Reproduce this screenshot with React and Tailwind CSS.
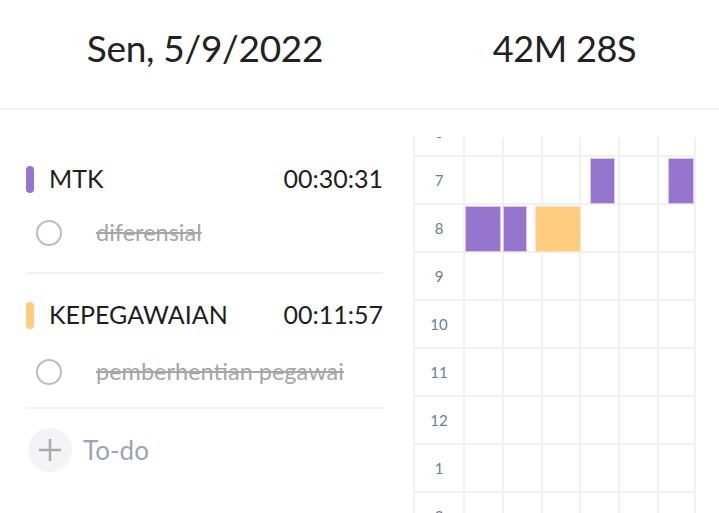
import React from 'react';

const groups = [
  { name: 'MTK', time: '00:30:31', color: 'bg-[#9575cd]', todo: 'diferensial' },
  { name: 'KEPEGAWAIAN', time: '00:11:57', color: 'bg-[#ffcc80]', todo: 'pemberhentian pegawai' },
];

const hours = ['6', '7', '8', '9', '10', '11', '12', '1', '2'];

// blocks per hour row: left offset / width in px from the row's left edge
const blocks = {
  7: [
    { left: 177, width: 25, color: 'bg-[#9575cd] border-[#d6c9ee]' },
    { left: 255, width: 26, color: 'bg-[#9575cd] border-[#d6c9ee]' },
  ],
  8: [
    { left: 52, width: 36, color: 'bg-[#9575cd] border-[#d6c9ee]' },
    { left: 90, width: 24, color: 'bg-[#9575cd] border-[#d6c9ee]' },
    { left: 122, width: 46, color: 'bg-[#ffcc80] border-[#ffe4bd]' },
  ],
};

const Group = ({ group, first }) => (
  <div className={`border-b-2 border-[#f1f1f1] ${first ? 'pt-[22px] pb-[19px]' : 'pt-[21px] pb-[15px]'}`}>
    <div className="flex items-center h-[40px]">
      <span className={`w-[8px] h-[27px] rounded-full ${group.color}`}></span>
      <span className="ml-[15px] text-[25px] text-[#1f1f1f]">{group.name}</span>
      <span className="ml-auto text-[25px] text-[#1f1f1f]">{group.time}</span>
    </div>
    <div className={`flex items-center h-[40px] ${first ? 'mt-[14px]' : 'mt-[17px]'}`}>
      <span className="ml-[10px] w-[26px] h-[26px] rounded-full border-2 border-[#bdbdbd]"></span>
      <span className="ml-[34px] text-[23.5px] text-[#a6a6a6] line-through">{group.todo}</span>
    </div>
  </div>
);

const App = () => {
  return (
    <div className="w-[719px] h-[513px] overflow-hidden bg-white" style={{ fontFamily: 'Lato, "Noto Sans", sans-serif' }}>
      <div className="flex h-[110px] pb-[12px] border-b-2 border-[#f2f2f2]">
        <div className="w-[410px] flex items-center justify-center text-[37px] text-[#222222] tracking-[-0.3px]">
          Sen, 5/9/2022
        </div>
        <div className="flex-1 flex items-center justify-center text-[36px] text-[#222222] tracking-[-0.3px]">
          42M 28S
        </div>
      </div>
      <div className="flex h-[403px]">
        <div className="w-[410px] pl-[26px] pr-[27px] pt-[27px]">
          {groups.map((g, i) => (
            <Group key={g.name} group={g} first={i === 0} />
          ))}
          <div className="flex items-center mt-[19px]">
            <span className="ml-[2px] w-[44px] h-[44px] rounded-full bg-[#f4f4f6] flex items-center justify-center">
              <svg width="26" height="26" viewBox="0 0 26 26">
                <path d="M13 2v22M2 13h22" stroke="#a9a9a9" strokeWidth="2.5" />
              </svg>
            </span>
            <span className="ml-[11px] text-[26px] text-[#9aa5b5]">To-do</span>
          </div>
        </div>
        <div className="flex-1 pl-[3px] pt-[27px] overflow-hidden">
          <div className="h-full overflow-hidden">
            <div className="-mt-[28px] w-[283px]">
              {hours.map((h) => (
                <div key={h} className="relative grid grid-cols-[50px_repeat(6,1fr)] h-[48px] border-b-2 border-[#f1f1f4]">
                  <div className="border-l-2 border-[#f1f1f4] flex items-center justify-center text-[15px] text-[#6c7f8d]">
                    {h}
                  </div>
                  {[0, 1, 2, 3, 4, 5].map((c) => (
                    <div key={c} className={`border-l-2 border-[#f1f1f4] ${c === 5 ? 'border-r-2' : ''}`}></div>
                  ))}
                  {(blocks[h] || []).map((b, i) => (
                    <div
                      key={i}
                      className={`absolute top-[1px] h-[46px] border ${b.color}`}
                      style={{ left: b.left, width: b.width }}
                    ></div>
                  ))}
                </div>
              ))}
            </div>
          </div>
        </div>
      </div>
    </div>
  );
};

export default App;
